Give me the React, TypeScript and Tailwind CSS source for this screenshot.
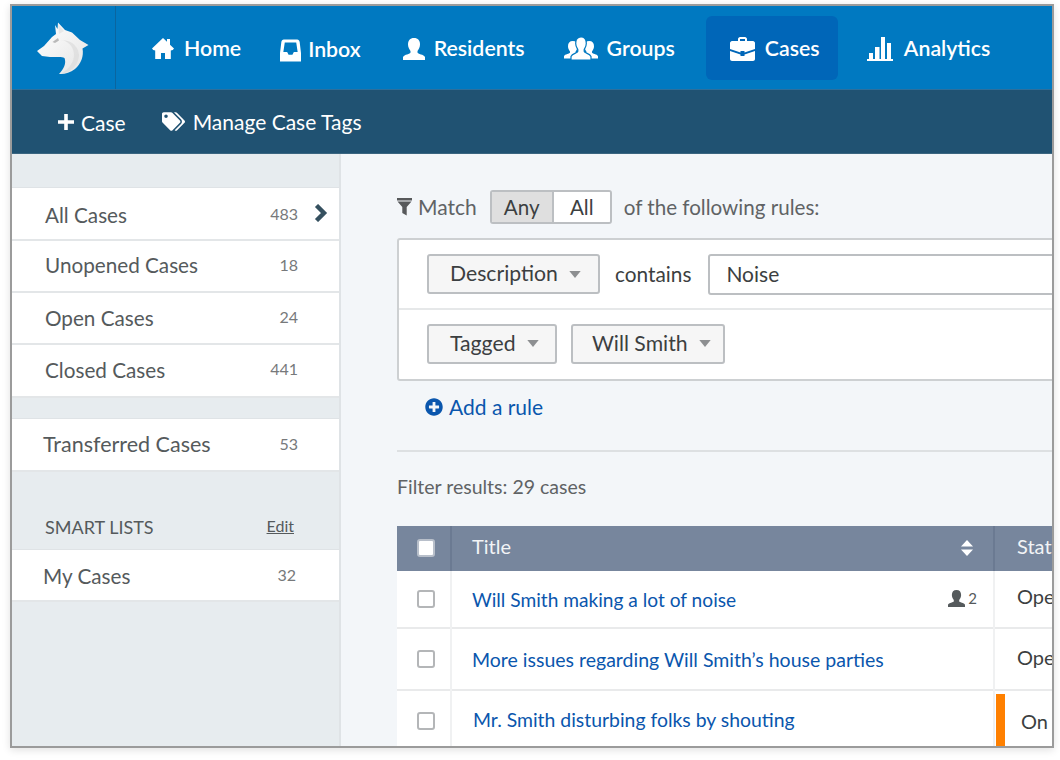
import { FaPlusCircle, FaTags } from "react-icons/fa";

const WolfLogo = () => (
  <svg className="h-[80px] w-[100px]" viewBox="0 0 100 80">
    <defs>
      <linearGradient id="wolfFill" x1="0" y1="0" x2="1" y2="1">
        <stop offset="0" stopColor="#ffffff" />
        <stop offset="1" stopColor="#e4e4e4" />
      </linearGradient>
    </defs>
    <path
      d="M38 12.5L45 20L52 22.5L60 30L68.5 35L62.5 38.5C64 46 61 54 55 59C50 63 44 64.5 39 64C44 59 46.5 53 44.5 48C41 46 36 47.5 30 47L22 46L17 41L24 36L32 27L36 24L35 15L37.5 19Z"
      fill="url(#wolfFill)"
    />
    <path
      d="M40 30C48 30 54 37 54 45C54 52 49 59 42 63C50 63 58 56 59 46C59.5 38 52 29 40 30Z"
      fill="#dcdcdc"
      opacity="0.7"
    />
    <path d="M32.5 32L38 28L39 30.5L35 33Z" fill="#b9b9b9" />
    <path d="M38 14L44 21L39 24Z" fill="#e8e8e8" />
  </svg>
);

const userPath =
  "M11 0C15 0 17 2.5 17 6.5C17 9.5 15.5 11.5 14.5 13V14.5C14.5 16 21 16.5 22 19V22H0V19C1 16.5 7.5 16 7.5 14.5V13C6.5 11.5 5 9.5 5 6.5C5 2.5 7 0 11 0Z";

const HomeIcon = () => (
  <svg className="h-[21px] w-[22px]" viewBox="0 0 22 21" fill="currentColor">
    <path d="M0 10.5L11 0L15 3.8V1H18V6.7L22 10.5L20.8 12L18.8 12.4V21H13V15H9V21H3.2V12.4L1.2 12Z" />
  </svg>
);

const InboxIcon = () => (
  <svg className="h-[23px] w-[21px]" viewBox="0 0 22 23" fill="currentColor">
    <path
      fillRule="evenodd"
      d="M4 0H18C19.5 0 20.3 1 20.6 2.5L22 14V23H0V14L1.4 2.5C1.7 1 2.5 0 4 0ZM5 3L3.5 13H7.5L9 16H13L14.5 13H18.5L17 3Z"
    />
  </svg>
);

const UserIcon = ({ className }: { className: string }) => (
  <svg className={className} viewBox="0 0 22 22" fill="currentColor">
    <path d={userPath} />
  </svg>
);

const GroupsIcon = () => (
  <svg className="h-[23px] w-[34px]" viewBox="0 0 34 23" fill="currentColor">
    <path transform="translate(0 4) scale(0.8)" d={userPath} />
    <path transform="translate(16.4 4) scale(0.8)" d={userPath} />
    <path
      transform="translate(7 0)"
      d="M10 0C13.5 0 15.3 2.5 15.3 6.5C15.3 9.5 14 11 13.2 12.5V14.5C13.2 16 19 16.5 20 19.5V23H0V19.5C1 16.5 6.8 16 6.8 14.5V12.5C6 11 4.7 9.5 4.7 6.5C4.7 2.5 6.5 0 10 0Z"
      stroke="#0079c1"
      strokeWidth="1.2"
    />
  </svg>
);

const BriefcaseIcon = () => (
  <svg className="h-[24px] w-[25px]" viewBox="0 0 25 24" fill="currentColor">
    <path d="M8 4V2C8 1 9 0 10 0H15C16 0 17 1 17 2V4H15V2H10V4Z" />
    <path d="M0 6C0 5 1 4 2 4H23C24 4 25 5 25 6V12L14.5 15.5V14H10.5V15.5L0 12Z" />
    <path d="M0 14L10.5 17.5V19H14.5V17.5L25 14V22C25 23 24 24 23 24H2C1 24 0 23 0 22Z" />
  </svg>
);

const BarsIcon = () => (
  <svg className="h-[24px] w-[26px]" viewBox="0 0 26 24" fill="currentColor">
    <rect x="2" y="16" width="4" height="6" />
    <rect x="8" y="10" width="4.5" height="12" />
    <rect x="14" y="0" width="4" height="22" />
    <rect x="20" y="6" width="4" height="16" />
    <rect x="0" y="22" width="26" height="2" />
  </svg>
);

const PlusIcon = () => (
  <svg className="h-[16px] w-[16px]" viewBox="0 0 16 16" fill="currentColor">
    <path d="M6.2 0H9.8V6.2H16V9.8H9.8V16H6.2V9.8H0V6.2H6.2Z" />
  </svg>
);

const FunnelIcon = () => (
  <svg className="h-[18px] w-[15px] text-[#57595b]" viewBox="0 0 15 18" fill="currentColor">
    <path d="M0 0H15V2.5H0Z" />
    <path d="M0.5 3.5H14.5L9.7 9V17.5L5.3 15V9Z" />
  </svg>
);

const ChevronIcon = () => (
  <svg className="absolute right-[11px] top-[16px] h-[18px] w-[14px] text-[#35505f]" viewBox="0 0 14 18" fill="none" stroke="currentColor" strokeWidth="4.4">
    <path d="M2.5 1.5L10 9L2.5 16.5" />
  </svg>
);

const SortIcon = () => (
  <svg className="h-[16px] w-[12px] text-white" viewBox="0 0 12 16" fill="currentColor">
    <path d="M6 0L12 6.5H0Z" />
    <path d="M6 16L0 9.5H12Z" />
  </svg>
);

const CaretIcon = () => (
  <svg className="h-[7px] w-[12px] shrink-0 text-[#8d8f91]" viewBox="0 0 13 8" fill="currentColor">
    <path d="M0 0H13L6.5 8Z" />
  </svg>
);

const navItems = [
  { label: "Home", icon: <HomeIcon />, cls: "ml-[36px] gap-[10px] pt-[2px]" },
  { label: "Inbox", icon: <InboxIcon />, cls: "ml-[39px] gap-[7px] pt-[5px]" },
  { label: "Residents", icon: <UserIcon className="h-[22px] w-[22px]" />, cls: "ml-[42px] gap-[9px] pt-[2px]" },
  { label: "Groups", icon: <GroupsIcon />, cls: "ml-[39px] gap-[9px] pt-[2px]" },
];

const sideItems = [
  { label: "All Cases", count: "483", active: true, rowClass: "h-[53px]", textClass: "pl-[33px] pt-[4px] text-[20.7px]", countClass: "" },
  { label: "Unopened Cases", count: "18", rowClass: "h-[52px]", textClass: "pl-[33px] text-[20.7px]", countClass: "pb-[2px]" },
  { label: "Open Cases", count: "24", rowClass: "h-[52px]", textClass: "pl-[33px] pt-[2px] text-[20.7px]", countClass: "pb-[2px]" },
  { label: "Closed Cases", count: "441", rowClass: "h-[53px]", textClass: "pl-[33px] text-[20.7px]", countClass: "pb-[4px]" },
];

const SideRow = ({
  label,
  count,
  active,
  rowClass,
  textClass,
  countClass = "",
}: {
  label: string;
  count: string;
  active?: boolean;
  rowClass: string;
  textClass: string;
  countClass?: string;
}) => (
  <div className={`relative flex items-center justify-between border-b-[2px] border-[#e3e6e8] bg-white pr-[41px] ${rowClass}`}>
    <span className={`text-[#555a5c] ${textClass}`}>{label}</span>
    <span className={`text-[16px] text-[#77797b] ${countClass}`}>{count}</span>
    {active && <ChevronIcon />}
  </div>
);

const DropBtn = ({ label, cls }: { label: string; cls: string }) => (
  <div className={`flex h-[40px] shrink-0 items-center gap-[11px] rounded-[3px] border-[2px] border-[#bcbfc2] bg-[#f6f6f6] text-[21.2px] text-[#3c3f41] ${cls}`}>
    {label}
    <CaretIcon />
  </div>
);

const Checkbox = ({ className = "" }: { className?: string }) => (
  <div className={`ml-[20px] h-[18px] w-[18px] rounded-[3px] border-[2px] border-[#b4b6b8] bg-white ${className}`} />
);

const App = () => {
  return (
    <div className="h-[760px] w-[1060px] overflow-hidden bg-white pl-[10px] pt-[4px] font-['Lato',sans-serif]">
      <div className="flex h-[744px] w-[1044px] flex-col overflow-hidden border-[2px] border-[#9b9b9b] shadow-[0_2px_8px_rgba(0,0,0,0.12)]">
        {/* Top nav */}
        <div className="flex h-[84px] shrink-0 border-b border-[#2d6f9c] bg-[#0079c1] text-white">
          <div className="w-[104px] shrink-0 overflow-hidden border-r border-[#0a659f] pl-[8px] pt-[4px]">
            <WolfLogo />
          </div>
          {navItems.map((item) => (
            <div key={item.label} className={`flex shrink-0 items-center ${item.cls} text-[21.3px] font-semibold`}>
              {item.icon}
              {item.label}
            </div>
          ))}
          <div className="my-[10px] ml-[31px] flex h-[64px] w-[132px] shrink-0 items-center gap-[10px] rounded-[6px] bg-[#0066b8] pl-[24px] pt-[1px] text-[21.3px] font-semibold">
            <BriefcaseIcon />
            Cases
          </div>
          <div className="ml-[29px] flex items-center gap-[11px] pt-[2px] text-[21.3px] font-semibold">
            <BarsIcon />
            Analytics
          </div>
        </div>

        {/* Sub nav */}
        <div className="flex h-[64px] shrink-0 items-center border-b border-[#3a6580] bg-[#205272] pl-[46px] text-[21px] text-white">
          <PlusIcon />
          <span className="ml-[7px] mt-[3px]">Case</span>
          <FaTags className="ml-[36px] h-[21px] w-[23px]" />
          <span className="ml-[8px]">Manage Case Tags</span>
        </div>

        {/* Body */}
        <div className="flex min-h-0 flex-1">
          <aside className="w-[329px] shrink-0 border-r-[2px] border-[#dfe3e6] bg-[#e7ecef]">
            <div className="h-[34px] border-b border-[#dfe3e6]" />
            {sideItems.map((item) => (
              <SideRow key={item.label} {...item} />
            ))}
            <div className="h-[20px]" />
            <div className="border-t border-[#dfe3e6]">
              <SideRow label="Transferred Cases" count="53" rowClass="h-[53px] pb-[1px]" textClass="pl-[31px] text-[21.5px]" />
            </div>
            <div className="flex h-[78px] items-end justify-between border-b border-[#dfe3e6] pb-[8px] pl-[33px] pr-[45px]">
              <span className="text-[18px] text-[#555a5c]">SMART LISTS</span>
              <span className="pb-[3px] text-[16px] text-[#555a5c] underline">Edit</span>
            </div>
            <SideRow label="My Cases" count="32" rowClass="h-[52px] pr-[43px]" textClass="pl-[31px] pt-[4px] text-[20.7px]" />
          </aside>

          <main className="min-w-0 flex-1 overflow-hidden bg-[#f3f6f9] pl-[56px]">
            <div className="w-[800px]">
              {/* Match row */}
              <div className="mt-[36px] flex h-[34px] items-center text-[20.6px] text-[#606365]">
                <FunnelIcon />
                <span className="ml-[6px] text-[21px]">Match</span>
                <div className="ml-[13px] flex h-[34px] overflow-hidden rounded-[3px] border-[2px] border-[#bcbfc2] text-[#3c3f41]">
                  <div className="flex w-[62px] items-center justify-center border-r-[2px] border-[#bcbfc2] bg-[#dfdfdf]">Any</div>
                  <div className="flex w-[56px] items-center justify-center bg-white">All</div>
                </div>
                <span className="ml-[12px]">of the following rules:</span>
              </div>

              {/* Rules */}
              <div className="mt-[14px] h-[143px] rounded-[3px] border-[2px] border-[#cdd0d2] bg-white">
                <div className="flex h-[70px] items-center border-b-[2px] border-[#e6e8e9] pl-[28px]">
                  <DropBtn label="Description" cls="w-[173px] pl-[21px]" />
                  <span className="ml-[15px] text-[20.8px] text-[#3c3f41]">contains</span>
                  <div className="ml-[17px] flex h-[41px] w-[500px] shrink-0 items-center rounded-[3px] border-[2px] border-[#bcbfc2] bg-white pl-[16px] text-[21px] text-[#3c3f41]">
                    Noise
                  </div>
                </div>
                <div className="flex h-[69px] items-center gap-[14px] pb-[2px] pl-[28px]">
                  <DropBtn label="Tagged" cls="w-[130px] pl-[21px]" />
                  <DropBtn label="Will Smith" cls="w-[154px] pl-[19px]" />
                </div>
              </div>

              <div className="mt-[10px] flex items-center gap-[6px] pl-[28px] text-[21px] text-[#0a56ad]">
                <FaPlusCircle className="h-[18px] w-[18px] text-[#0a56ad]" />
                Add a rule
              </div>

              <div className="mt-[27px] border-t-[2px] border-[#dde0e2]" />

              <div className="mt-[20px] text-[19.5px] text-[#606365]">Filter results: 29 cases</div>

              {/* Table */}
              <table className="mt-[25px] w-[800px] table-fixed border-collapse text-[19.4px]">
                <thead>
                  <tr className="h-[45px] bg-[#77869d] text-[20px] text-[#f2f4f6]">
                    <th className="w-[54px] border-r-[2px] border-[#6b7a92] font-normal">
                      <Checkbox className="border-[#b8bfca]" />
                    </th>
                    <th className="w-[543px] border-r-[2px] border-[#6b7a92] px-[20px] text-left font-normal">
                      <div className="flex items-center justify-between">
                        <span className="pb-[4px]">Title</span>
                        <SortIcon />
                      </div>
                    </th>
                    <th className="pb-[4px] pl-[22px] text-left font-normal">Status</th>
                  </tr>
                </thead>
                <tbody className="bg-white">
                  <tr className="h-[57px] border-b-[2px] border-[#e9eaeb]">
                    <td className="border-r-[2px] border-[#f0f1f2]"><Checkbox /></td>
                    <td className="border-r-[2px] border-[#f0f1f2] pl-[20px] pr-[16px]">
                      <div className="flex items-center justify-between">
                        <span className="pt-[4px] text-[19.15px] text-[#0a56ad]">Will Smith making a lot of noise</span>
                        <span className="flex items-center gap-[3px] text-[15px] text-[#555a5c]">
                          <UserIcon className="h-[17px] w-[17px]" />2
                        </span>
                      </div>
                    </td>
                    <td className="pb-[5px] pl-[22px] text-[20px] text-[#3c3f41]">Open</td>
                  </tr>
                  <tr className="h-[62px] border-b-[2px] border-[#e9eaeb]">
                    <td className="border-r-[2px] border-[#f0f1f2]"><Checkbox /></td>
                    <td className="border-r-[2px] border-[#f0f1f2] pl-[20px] pt-[2px] text-[19.5px] text-[#0a56ad]">More issues regarding Will Smith’s house parties</td>
                    <td className="pb-[3px] pl-[22px] text-[20px] text-[#3c3f41]">Open</td>
                  </tr>
                  <tr className="h-[62px]">
                    <td className="border-r-[2px] border-[#f0f1f2]"><Checkbox /></td>
                    <td className="relative border-r-[2px] border-[#f0f1f2] pb-[4px] pl-[21px] text-[#0a56ad]">
                      Mr. Smith disturbing folks by shouting
                      <div className="absolute right-[-12px] top-[3px] h-[59px] w-[9px] bg-[#ff8000]" />
                    </td>
                    <td className="pl-[26px] text-[20px] text-[#3c3f41]">On hold</td>
                  </tr>
                </tbody>
              </table>
            </div>
          </main>
        </div>
      </div>
    </div>
  );
};

export default App;
